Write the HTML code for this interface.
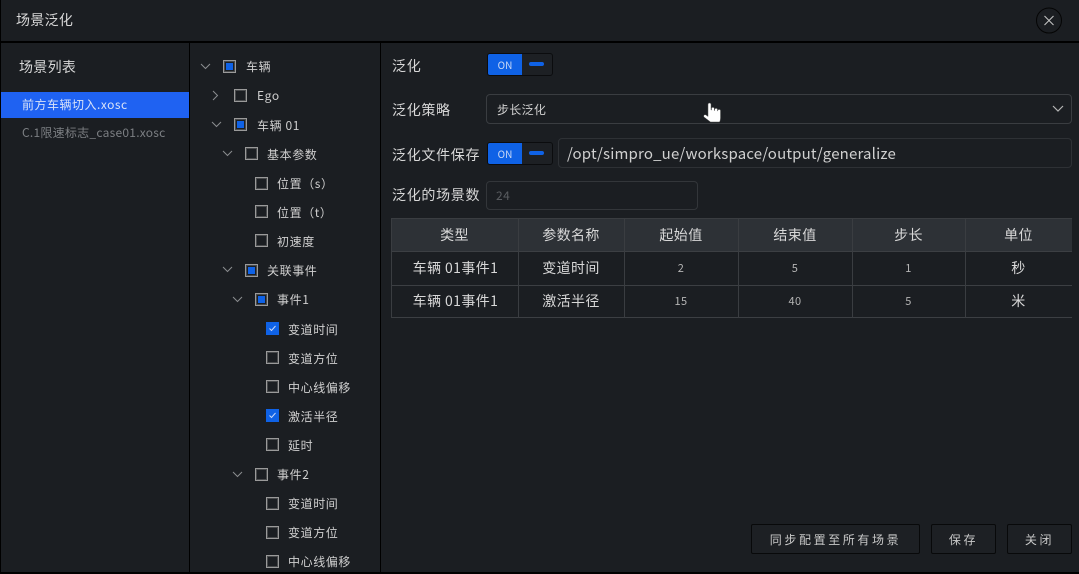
<!DOCTYPE html>
<html><head><meta charset="utf-8"><style>
*{box-sizing:border-box}
html,body{margin:0;padding:0;background:#1b1e22}
body{width:1079px;height:574px;position:relative;overflow:hidden;font-family:"Noto Sans CJK SC","Liberation Sans",sans-serif;color:#d6d6d6;font-size:12px}
.a{position:absolute;white-space:nowrap}
.t{position:absolute;white-space:nowrap;line-height:18px;height:18px;font-size:12px;letter-spacing:.6px;color:#cfcfcf;margin-top:1px}
.l{position:absolute;white-space:nowrap;line-height:20px;height:20px;font-size:14px;left:392px;letter-spacing:.7px;color:#d8d8d8}
.c{position:absolute;width:13px;height:13px;border:1px solid #9a9a9a;box-shadow:inset 0 0 0 1px rgba(140,140,140,.4);background:#1b1e22}
.c.h::after{content:"";position:absolute;left:2px;top:2px;width:7px;height:7px;background:#0f62e6}
.c.k{background:#0f62e6;border-color:#0f62e6;box-shadow:none}
.c svg{position:absolute;left:0;top:0}
.ar{position:absolute}
.cell{position:absolute;text-align:center;line-height:33px;font-size:14px;letter-spacing:.4px;color:#d8d8d8}
.n{font-size:11px;color:#b5b5b5}
.v{position:absolute;background:#3a3d41;width:1px;top:218px;height:100px}
.sw{position:absolute;width:66px;height:23px;border:1px solid #0b0c0e;border-radius:3px;background:#1d2024;left:487px}
.sw i{position:absolute;left:0;top:0;width:34px;height:21px;background:#0f62e6;border-radius:2px 0 0 2px;font-style:normal;font-size:10px;color:#c9d8f5;text-align:center;line-height:21px}
.sw b{position:absolute;left:41px;top:8px;width:15px;height:4px;border-radius:2px;background:#0f62e6}
.btn{position:absolute;top:524px;height:30px;border:1px solid #08090a;background:#1d2024;text-align:center;line-height:29px;font-size:12px;letter-spacing:2.6px;color:#c8c8c8;border-radius:2px}
.box{position:absolute;border:1px solid #2e3135;border-radius:4px}
</style></head><body>
<div class="a" style="left:0;top:0;width:1px;height:574px;background:#000"></div>
<div class="a" style="left:0;top:41px;width:1079px;height:2px;background:#000"></div>
<div class="a" style="left:189px;top:42px;width:1px;height:532px;background:#000"></div>
<div class="a" style="left:380px;top:42px;width:1px;height:532px;background:#000"></div>
<div class="a" style="left:0;top:572px;width:1079px;height:2px;background:#000"></div>

<div class="a" style="left:16px;top:10px;font-size:14px;line-height:20px;letter-spacing:.3px;color:#d8d8d8">场景泛化</div>
<svg class="a" style="left:1036px;top:7px" width="26" height="27" viewBox="0 0 26 27"><circle cx="13" cy="13.500" r="12.500" fill="#1b1e22" stroke="#050505"/><path d="M8.500 9L17.500 18M17.500 9L8.500 18" stroke="#c8c8c8" stroke-width="1" fill="none"/></svg>

<div class="a" style="left:19px;top:57px;font-size:14px;line-height:20px;letter-spacing:.3px;color:#d8d8d8">场景列表</div>
<div class="a" style="left:1px;top:92px;width:188px;height:26px;background:#1f62f2"></div>
<div class="a" style="left:22px;top:96px;font-size:12px;line-height:18px;letter-spacing:.5px;color:#d8e2f8">前方车辆切入.xosc</div>
<div class="a" style="left:22px;top:124px;font-size:12px;line-height:18px;letter-spacing:.25px;color:#7c7f83">C.1限速标志_case01.xosc</div>

<!-- tree -->
<svg class="ar" style="left:0;top:0" width="380" height="574" fill="none" stroke="#8b8d90" stroke-width="1">
<path d="M201 64l4.500 4.500 4.500-4.500"/>
<path d="M213 91l4.500 4.500-4.500 4.500"/>
<path d="M212 122l4.500 4.500 4.500-4.500"/>
<path d="M223 151l4.500 4.500 4.500-4.500"/>
<path d="M223 267l4.500 4.500 4.500-4.500"/>
<path d="M233 297l4.500 4.500 4.500-4.500"/>
<path d="M233 472l4.500 4.500 4.500-4.500"/>
</svg>
<div class="c h" style="left:223px;top:60px"></div><div class="t" style="left:246px;top:57px">车辆</div>
<div class="c" style="left:234px;top:89px"></div><div class="t" style="left:257px;top:86px">Ego</div>
<div class="c h" style="left:234px;top:118px"></div><div class="t" style="left:257px;top:116px">车辆 01</div>
<div class="c" style="left:245px;top:147px"></div><div class="t" style="left:267px;top:145px">基本参数</div>
<div class="c" style="left:255px;top:177px"></div><div class="t" style="left:277px;top:174px">位置（s）</div>
<div class="c" style="left:255px;top:205px"></div><div class="t" style="left:277px;top:203px">位置（t）</div>
<div class="c" style="left:255px;top:234px"></div><div class="t" style="left:277px;top:232px">初速度</div>
<div class="c h" style="left:245px;top:264px"></div><div class="t" style="left:267px;top:261px">关联事件</div>
<div class="c h" style="left:255px;top:293px"></div><div class="t" style="left:277px;top:290px">事件1</div>
<div class="c k" style="left:266px;top:322px"><svg width="11" height="11" viewBox="0 0 11 11"><path d="M2.500 5.500l2 2 4-4.500" stroke="#c8d8f8" stroke-width="1" fill="none"/></svg></div><div class="t" style="left:288px;top:320px">变道时间</div>
<div class="c" style="left:266px;top:351px"></div><div class="t" style="left:288px;top:349px">变道方位</div>
<div class="c" style="left:266px;top:380px"></div><div class="t" style="left:288px;top:378px">中心线偏移</div>
<div class="c k" style="left:266px;top:409px"><svg width="11" height="11" viewBox="0 0 11 11"><path d="M2.500 5.500l2 2 4-4.500" stroke="#c8d8f8" stroke-width="1" fill="none"/></svg></div><div class="t" style="left:288px;top:407px">激活半径</div>
<div class="c" style="left:266px;top:438px"></div><div class="t" style="left:288px;top:436px">延时</div>
<div class="c" style="left:255px;top:468px"></div><div class="t" style="left:277px;top:465px">事件2</div>
<div class="c" style="left:266px;top:497px"></div><div class="t" style="left:288px;top:494px">变道时间</div>
<div class="c" style="left:266px;top:526px"></div><div class="t" style="left:288px;top:523px">变道方位</div>
<div class="c" style="left:266px;top:555px"></div><div class="t" style="left:288px;top:552px">中心线偏移</div>

<!-- right form -->
<div class="l" style="top:56px">泛化</div>
<div class="sw" style="top:53px"><i>ON</i><b></b></div>
<div class="l" style="top:100px">泛化策略</div>
<div class="box" style="left:486px;top:94px;width:586px;height:30px;border-color:#3a3d41"></div>
<div class="a" style="left:497px;top:101px;font-size:12px;line-height:18px;letter-spacing:.3px;color:#d0d0d0">步长泛化</div>
<svg class="a" style="left:1051px;top:104px" width="14" height="10" viewBox="0 0 14 10"><path d="M2 2l5 5 5-5" stroke="#b5b5b5" stroke-width="1.200" fill="none"/></svg>
<div class="l" style="top:145px">泛化文件保存</div>
<div class="sw" style="top:142px"><i>ON</i><b></b></div>
<div class="box" style="left:558px;top:138px;width:514px;height:30px"></div>
<div class="a" style="left:567px;top:143px;font-size:15px;line-height:22px;letter-spacing:.17px;color:#d0d0d0">/opt/simpro_ue/workspace/output/generalize</div>
<div class="l" style="top:185px">泛化的场景数</div>
<div class="box" style="left:486px;top:181px;width:212px;height:29px;border-color:#33363a"></div>
<div class="a" style="left:496px;top:187px;font-size:12px;line-height:18px;letter-spacing:.5px;color:#5a5d61">24</div>

<!-- table -->
<div class="a" style="left:391px;top:218px;width:681px;height:33px;background:#2d3136"></div>
<div class="a" style="left:391px;top:218px;width:681px;height:1px;background:#3a3d41"></div>
<div class="a" style="left:391px;top:251px;width:681px;height:1px;background:#3c3f43"></div>
<div class="a" style="left:391px;top:285px;width:681px;height:1px;background:#3c3f43"></div>
<div class="a" style="left:391px;top:317px;width:681px;height:1px;background:#3c3f43"></div>
<div class="v" style="left:391px"></div><div class="v" style="left:518px"></div><div class="v" style="left:624px"></div><div class="v" style="left:738px"></div><div class="v" style="left:852px"></div><div class="v" style="left:965px"></div>

<div class="cell" style="left:391px;top:219px;width:127px">类型</div>
<div class="cell" style="left:518px;top:219px;width:106px">参数名称</div>
<div class="cell" style="left:624px;top:219px;width:114px">起始值</div>
<div class="cell" style="left:738px;top:219px;width:114px">结束值</div>
<div class="cell" style="left:852px;top:219px;width:113px">步长</div>
<div class="cell" style="left:965px;top:219px;width:107px">单位</div>

<div class="cell" style="left:392px;top:252px;width:127px">车辆 01事件1</div>
<div class="cell" style="left:518px;top:252px;width:106px">变道时间</div>
<div class="cell n" style="left:624px;top:252px;width:114px">2</div>
<div class="cell n" style="left:738px;top:252px;width:114px">5</div>
<div class="cell n" style="left:852px;top:252px;width:113px">1</div>
<div class="cell" style="left:965px;top:252px;width:107px">秒</div>

<div class="cell" style="left:392px;top:285px;width:127px">车辆 01事件1</div>
<div class="cell" style="left:518px;top:285px;width:106px">激活半径</div>
<div class="cell n" style="left:624px;top:285px;width:114px">15</div>
<div class="cell n" style="left:738px;top:285px;width:114px">40</div>
<div class="cell n" style="left:852px;top:285px;width:113px">5</div>
<div class="cell" style="left:965px;top:285px;width:107px">米</div>

<!-- buttons -->
<div class="btn" style="left:751px;width:169px">同步配置至所有场景</div>
<div class="btn" style="left:931px;width:65px">保存</div>
<div class="btn" style="left:1007px;width:65px">关闭</div>

<!-- cursor -->
<svg class="a" style="left:702px;top:100px" width="22" height="24" viewBox="0 0 22 24"><path d="M6 4.500c0-2 3-2 3 0V10h.5V8.500c0-1.500 2.800-1.500 2.800 0V10.500h.4V9.500c0-1.500 2.800-1.500 2.800 0V11h.3V10.500c0-1.400 2.700-1.400 2.700 0V18c0 2-.5 3-1 4H8.500L2 17c-1-1.200.5-3 2-2l2 1.500z" fill="#fff" stroke="#555" stroke-width=".5"/></svg>
</body></html>
